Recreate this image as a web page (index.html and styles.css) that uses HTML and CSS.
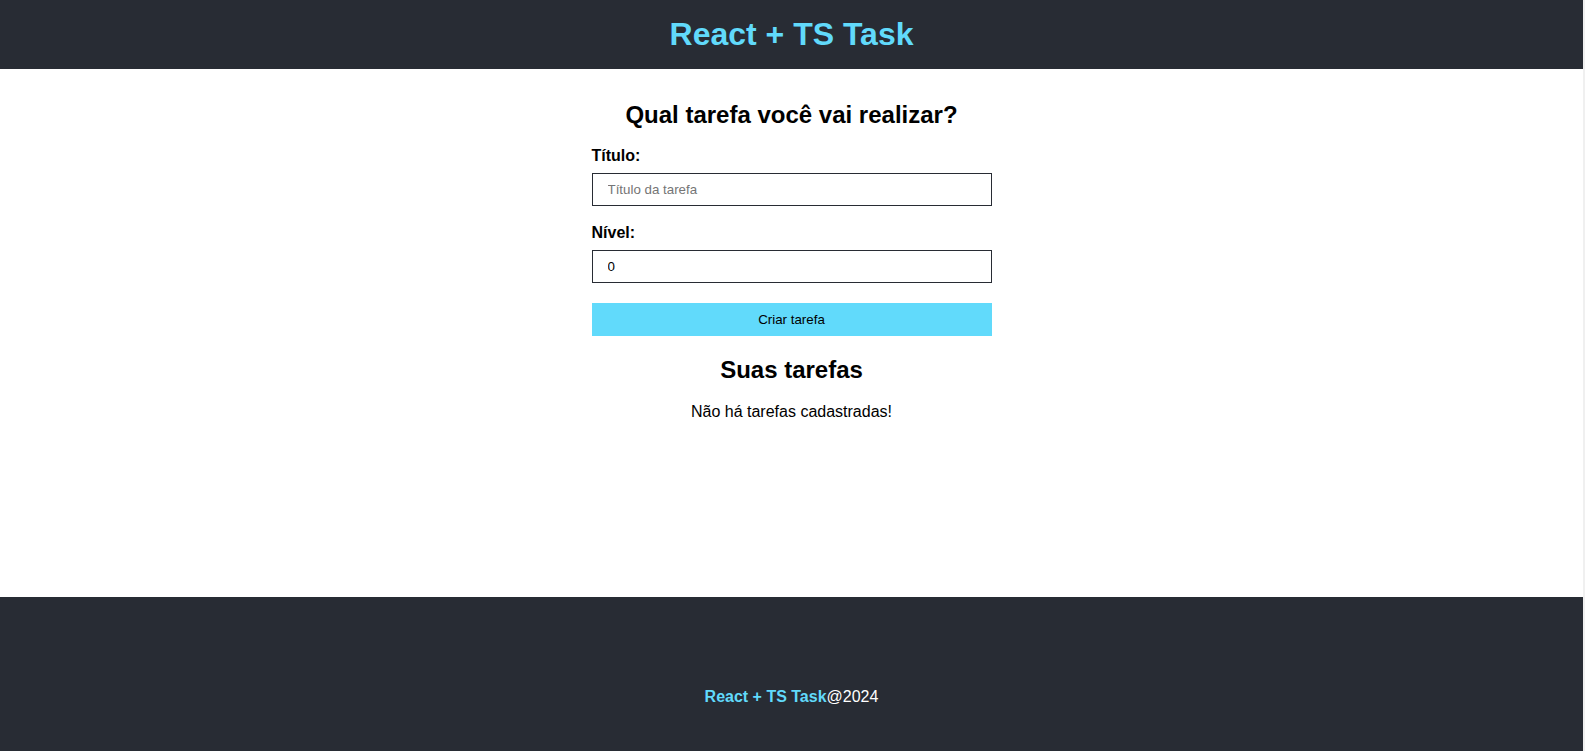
FILE: index.html
```html
<!DOCTYPE html>
<html lang="pt-BR">
<head>
<meta charset="utf-8">
<title>React + TS Task</title>
<link rel="stylesheet" href="styles.css">
</head>
<body>
<div class="app">
  <header class="header">
    <h1 class="header-title">React + TS Task</h1>
  </header>
  <main class="main">
    <h2 class="section-title">Qual tarefa você vai realizar?</h2>
    <form class="task-form">
      <div class="field">
        <label class="field-label" for="title">Título:</label>
        <input class="field-input" id="title" type="text" placeholder="Título da tarefa">
      </div>
      <div class="field">
        <label class="field-label" for="level">Nível:</label>
        <input class="field-input" id="level" type="text" value="0">
      </div>
      <button class="submit-btn" type="button">Criar tarefa</button>
    </form>
    <h2 class="section-title list-title">Suas tarefas</h2>
    <p class="empty">Não há tarefas cadastradas!</p>
  </main>
  <footer class="footer">
    <p class="footer-text"><span class="footer-brand">React + TS Task</span>@2024</p>
  </footer>
</div>
</body>
</html>
```

FILE: styles.css
```css
html {
  background: #f0f0f0;
}
body {
  margin: 0;
  font-family: "Liberation Sans", Arial, sans-serif;
  color: #000;
}
.app {
  width: calc(100% - 2px);
  min-height: 100vh;
  display: flex;
  flex-direction: column;
  background: #fff;
}
.header {
  height: 69px;
  background: #282c34;
  display: flex;
  align-items: center;
  justify-content: center;
}
.header-title {
  margin: 0;
  font-size: 32px;
  font-weight: bold;
  color: #61dafb;
}
.main {
  flex: 1;
  display: flex;
  flex-direction: column;
  align-items: center;
  padding-top: 32px;
}
.section-title {
  margin: 0;
  font-size: 24px;
  font-weight: bold;
  line-height: 28px;
}
.task-form {
  width: 400px;
  margin-top: 18px;
  display: flex;
  flex-direction: column;
}
.field {
  display: flex;
  flex-direction: column;
  margin-bottom: 18px;
}
.field-label {
  font-size: 16px;
  font-weight: bold;
  line-height: 18px;
  margin-bottom: 8px;
}
.field-input {
  box-sizing: border-box;
  height: 33px;
  border: 1px solid #282c34;
  border-radius: 0;
  padding: 0 15px;
  font-family: "Liberation Sans", Arial, sans-serif;
  font-size: 13.33px;
  color: #000;
  background: #fff;
  outline: none;
}
.field-input::placeholder {
  color: #757575;
}
.submit-btn {
  margin-top: 2px;
  height: 33px;
  border: none;
  background: #61dafb;
  font-family: "Liberation Sans", Arial, sans-serif;
  font-size: 13.33px;
  color: #000;
  cursor: pointer;
}
.list-title {
  margin-top: 20px;
}
.empty {
  margin: 19px 0 0;
  font-size: 16px;
  line-height: 18px;
}
.footer {
  height: 154px;
  box-sizing: border-box;
  background: #282c34;
  padding-top: 91px;
  display: flex;
  justify-content: center;
}
.footer-text {
  margin: 0;
  font-size: 16px;
  line-height: 18px;
  color: #fff;
}
.footer-brand {
  color: #61dafb;
  font-weight: bold;
}
```
